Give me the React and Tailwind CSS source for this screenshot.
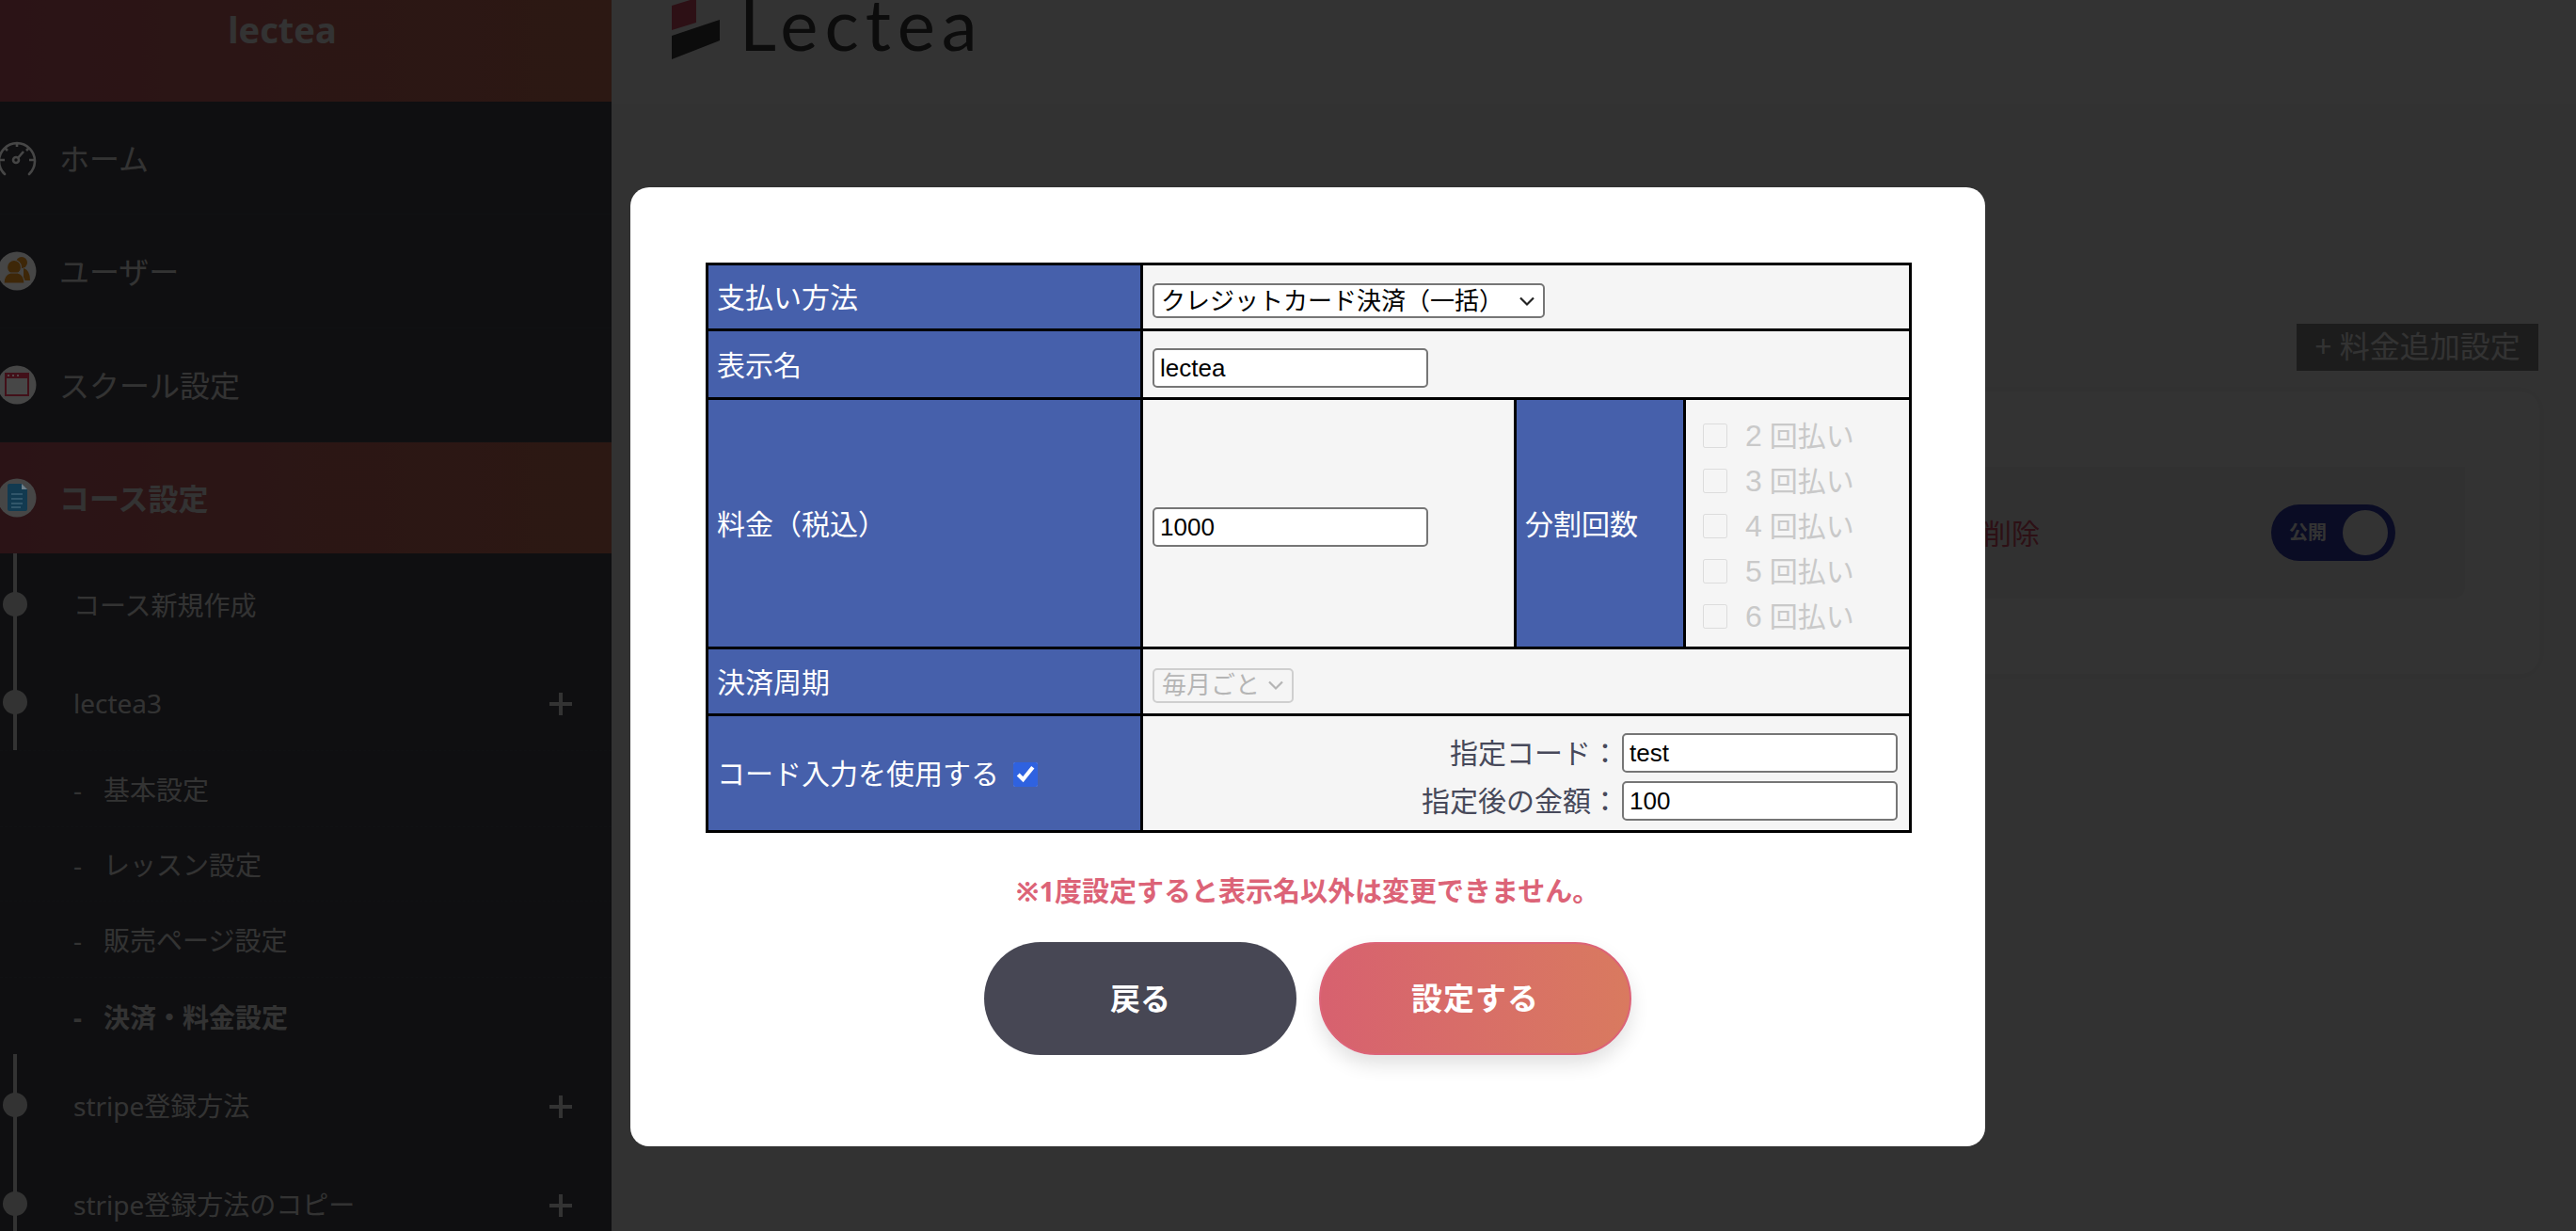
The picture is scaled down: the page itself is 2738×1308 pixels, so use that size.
import React from "react";

const inputCls = "w-[293px] h-[42px] bg-white border-2 border-[#767676] rounded-[5px] px-[6px] text-[26px] text-black outline-none";
const labelCell = "bg-[#4660ab] text-white text-[30px] text-left font-normal pl-[9px] pr-[9px] pt-[2px] border-[3px] border-black";
const valueCell = "bg-[#f5f5f5] px-[10px] pt-[8px] border-[3px] border-black";

const Chevron = ({ color }) => (
    <svg className="absolute right-[9px] top-1/2 -translate-y-1/2" width="20" height="12" viewBox="0 0 20 12" fill="none">
        <path d="M3 2.5 L10 9.5 L17 2.5" stroke={color} strokeWidth="2.2" />
    </svg>
);

// the sidebar icons sit above the dimming layer, so their colours are the dimmed ones
const GaugeIcon = () => (
    <svg width="42" height="38" viewBox="0 0 42 38" fill="none" stroke="#464646" strokeWidth="2.6">
        <path d="M8 36 A19 19 0 1 1 34 36" strokeLinecap="round" />
        <path d="M21 2 V7 M3 21 H8 M34 21 H39 M8 8 L11 11 M34 8 L31 11" />
        <circle cx="20" cy="21" r="3" />
        <path d="M22 19 L28 12" />
    </svg>
);

const UsersIcon = () => (
    <svg width="42" height="42" viewBox="0 0 42 42">
        <circle cx="21" cy="21" r="20.5" fill="#464646" />
        <circle cx="26" cy="12" r="6" fill="#3e2708" />
        <path d="M28 18 Q35 20 35 31 H28 Z" fill="#3e2708" />
        <circle cx="18" cy="17" r="7.5" fill="#3e2708" stroke="#464646" strokeWidth="1.2" />
        <path d="M7 34 Q7 25 14 23 H22 Q29 25 29 34 Z" fill="#3e2708" stroke="#464646" strokeWidth="1.2" />
    </svg>
);

const WindowIcon = () => (
    <svg width="42" height="42" viewBox="0 0 42 42">
        <circle cx="21" cy="21" r="20.5" fill="#464646" />
        <rect x="8" y="8" width="26" height="25" fill="#421019" />
        <rect x="10" y="14" width="22" height="17" fill="#474747" />
        <path d="M11 11 H13 M16 11 H18 M21 11 H23" stroke="#5a5a5a" strokeWidth="1.5" />
    </svg>
);

const DocIcon = () => (
    <svg width="42" height="42" viewBox="0 0 42 42">
        <circle cx="21" cy="21" r="20.5" fill="#464646" />
        <path d="M12 6 H26 L32 12 V33 Q32 35 30 35 H13 Q11 35 11 33 V8 Q11 6 13 6 Z" fill="#123a50" />
        <path d="M26 6 V12 H32 Z" fill="#6d7f89" />
        <path d="M15 17 H27 M15 22 H27 M15 27 H27 M15 31 H25" stroke="#3d6073" strokeWidth="1.6" />
    </svg>
);

const Plus = () => (
    <svg width="24" height="24" viewBox="0 0 24 24" className="absolute left-[584px] top-1/2 -translate-y-[10px]">
        <path d="M12 0 V24 M0 12 H24" stroke="#fff" strokeWidth="4" />
    </svg>
);

const MainItem = ({ icon, label, h, active }) => (
    <div className={`flex items-center pl-[63px] pt-[2px] relative text-[32px] ${h} ${active ? "font-bold bg-gradient-to-r from-[#d7616f] to-[#d97a5f]" : "border-b border-[#52555e]"}`}>
        <span className="absolute z-10 left-[-3px] top-1/2 -translate-y-1/2 flex">{icon}</span>
        {label}
    </div>
);

const CourseItem = ({ label, h, plus, lineTop, lineBottom, dashed }) => (
    <div className={`relative flex items-center pl-[78px] pt-[2px] text-[28px] ${h} ${dashed ? "border-b border-dashed border-[#52555e]" : ""}`}>
        {lineTop && <span className="absolute left-[14px] top-0 bottom-1/2 w-[4px] bg-white" />}
        {lineBottom && <span className="absolute left-[14px] top-1/2 bottom-0 w-[4px] bg-white" />}
        <span className="absolute left-[3px] top-1/2 -translate-y-1/2 w-[26px] h-[26px] rounded-full bg-white" />
        {label}
        {plus && <Plus />}
    </div>
);

const SubItem = ({ label, bold, dashed, h }) => (
    <div className={`flex items-center pl-[78px] pt-[2px] text-[28px] ${h} ${bold ? "font-bold" : ""} ${dashed ? "border-b border-dashed border-[#52555e]" : ""}`}>
        <span className="w-[32px]">-</span>
        {label}
    </div>
);

const Sidebar = () => (
    <aside className="w-[650px] shrink-0 h-full bg-[#4a4c54] text-white overflow-hidden">
        <div className="h-[108px] bg-gradient-to-r from-[#d7616f] to-[#d97a5f] flex justify-center pr-[50px] pt-[3px] text-[38px] font-bold leading-[56px]">lectea</div>
        <MainItem icon={<GaugeIcon />} label="ホーム" h="h-[120px]" />
        <MainItem icon={<UsersIcon />} label="ユーザー" h="h-[121px]" />
        <MainItem icon={<WindowIcon />} label="スクール設定" h="h-[121px]" />
        <MainItem icon={<DocIcon />} label="コース設定" h="h-[118px]" active />
        <CourseItem label="コース新規作成" h="h-[107px]" lineTop lineBottom />
        <CourseItem label="lectea3" h="h-[103px]" plus lineTop lineBottom dashed />
        <SubItem label="基本設定" h="h-[81px]" dashed />
        <SubItem label="レッスン設定" h="h-[79px]" dashed />
        <SubItem label="販売ページ設定" h="h-[81px]" dashed />
        <SubItem label="決済・料金設定" h="h-[81px]" bold />
        <CourseItem label="stripe登録方法" h="h-[108px]" plus lineTop lineBottom />
        <CourseItem label="stripe登録方法のコピー" h="h-[102px]" plus lineTop lineBottom />
    </aside>
);

const Main = () => (
    <main className="flex-1 h-full bg-[#fbfbfb]">
        <header className="h-[110px] bg-white flex items-start pl-[64px] gap-[20px]">
            <svg width="52" height="64" viewBox="0 0 52 64">
                <polygon points="0,6 26,-2 26,24 0,32" fill="#e0506a" />
                <polygon points="0,38 51,21 51,43 0,63" fill="#3c3c3c" />
            </svg>
            <span className="text-[76px] leading-[76px] -mt-[13px] font-['Lato',sans-serif] font-normal tracking-[7px] text-[#3c3c3c]">Lectea</span>
        </header>
        <div className="flex justify-end pr-[40px] pt-[234px]">
            <div className="w-[257px] h-[50px] bg-[#8c8c8c] text-white text-[32px] leading-[48px] text-center">+ 料金追加設定</div>
        </div>
        <div className="ml-[40px] mr-[39px] mt-[22px] h-[300px] bg-white rounded-[20px] shadow-[0_0_16px_rgba(0,0,0,0.08)] pt-[80px] pl-[40px] pr-[79px]">
            <div className="h-[140px] bg-[#f3f3f3] rounded-b-[12px] flex items-center justify-end pr-[74px]">
                <span className="text-[30px] text-[#e0506a] mr-[246px]">削除</span>
                <div className="w-[132px] h-[60px] rounded-full bg-[#323cb4] flex items-center justify-between pl-[19px] pr-[8px]">
                    <span className="text-white text-[20px] font-bold">公開</span>
                    <span className="w-[48px] h-[48px] rounded-full bg-white" />
                </div>
            </div>
        </div>
    </main>
);

const InstallmentRow = ({ n }) => (
    <label className="flex items-center h-[48px] text-[30px] text-[#c9c9c9]">
        <input type="checkbox" disabled className="w-[26px] h-[26px] mr-[19px] accent-[#2f62e0] opacity-60" />
        <span className="mr-[8px] text-[32px]">{n}</span>回払い
    </label>
);

const PriceTable = () => (
    <table className="w-[1279px] table-fixed border-collapse font-['Liberation_Sans','Noto_Sans_CJK_JP',sans-serif] text-[#47495a]">
        <colgroup>
            <col className="w-[462px]" />
            <col className="w-[397px]" />
            <col className="w-[180px]" />
            <col className="w-[240px]" />
        </colgroup>
        <tbody>
            <tr className="h-[70px]">
                <th className={labelCell}>支払い方法</th>
                <td colSpan={3} className={valueCell}>
                    <div className="relative w-[417px] h-[37px]">
                        <select className="appearance-none w-full h-full bg-white border-2 border-[#767676] rounded-[5px] pl-[7px] text-[26px] leading-[30px] text-black outline-none">
                            <option>クレジットカード決済（一括）</option>
                        </select>
                        <Chevron color="#222" />
                    </div>
                </td>
            </tr>
            <tr className="h-[73px]">
                <th className={labelCell}>表示名</th>
                <td colSpan={3} className={valueCell}>
                    <input className={`${inputCls} block`} defaultValue="lectea" />
                </td>
            </tr>
            <tr className="h-[265px]">
                <th className={labelCell}>料金（税込）</th>
                <td className={valueCell}>
                    <input className={`${inputCls} block`} defaultValue="1000" />
                </td>
                <th className={labelCell}>分割回数</th>
                <td className="bg-[#f5f5f5] pl-[18px] pt-[6px] border-[3px] border-black">
                    {[2, 3, 4, 5, 6].map(n => <InstallmentRow key={n} n={n} />)}
                </td>
            </tr>
            <tr className="h-[71px]">
                <th className={labelCell}>決済周期</th>
                <td colSpan={3} className={valueCell}>
                    <div className="relative w-[150px] h-[37px]">
                        <select disabled className="appearance-none w-full h-full bg-[#f5f5f5] border-2 border-[#cfcfcf] rounded-[5px] pl-[8px] text-[26px] leading-[30px] text-[#b5b5b5] outline-none">
                            <option>毎月ごと</option>
                        </select>
                        <Chevron color="#b5b5b5" />
                    </div>
                </td>
            </tr>
            <tr className="h-[124px]">
                <th className={labelCell}>
                    <div className="flex items-center">
                        コード入力を使用する
                        <input type="checkbox" defaultChecked className="w-[26px] h-[26px] ml-[15px] accent-[#2f62e0]" />
                    </div>
                </th>
                <td colSpan={3} className="bg-[#f5f5f5] pl-[10px] pr-[12px] pt-[8px] border-[3px] border-black">
                    <div className="flex flex-col items-end gap-[6px] text-[30px]">
                        <div className="flex items-center">
                            指定コード：
                            <input className={`${inputCls} ml-[3px]`} defaultValue="test" />
                        </div>
                        <div className="flex items-center">
                            指定後の金額：
                            <input className={`${inputCls} ml-[3px]`} defaultValue="100" />
                        </div>
                    </div>
                </td>
            </tr>
        </tbody>
    </table>
);

const Modal = () => (
    <div className="absolute inset-0 bg-black/80">
        <div className="ml-[670px] mt-[199px] w-[1440px] h-[1019px] bg-white rounded-[20px] px-[80px] pt-[80px]">
            <PriceTable />
            <p className="mt-[42px] text-center text-[29px] leading-[40px] font-bold text-[#dc6377]">※1度設定すると表示名以外は変更できません。</p>
            <div className="mt-[34px] flex justify-center gap-[24px]">
                <button className="w-[332px] h-[120px] rounded-full bg-[#474754] text-white text-[32px] font-bold">戻る</button>
                <button className="w-[332px] h-[120px] rounded-full bg-gradient-to-r from-[#d7616f] to-[#d97a5f] border-2 border-[#dc6377] text-white text-[33px] tracking-[1px] font-bold shadow-[0_10px_20px_rgba(0,0,0,0.12)]">設定する</button>
            </div>
        </div>
    </div>
);

export default function App() {
    return (
        <div className="relative w-[2738px] h-[1308px] overflow-hidden flex font-['Noto_Sans','Noto_Sans_CJK_JP',sans-serif]">
            <Sidebar />
            <Main />
            <Modal />
        </div>
    );
}
